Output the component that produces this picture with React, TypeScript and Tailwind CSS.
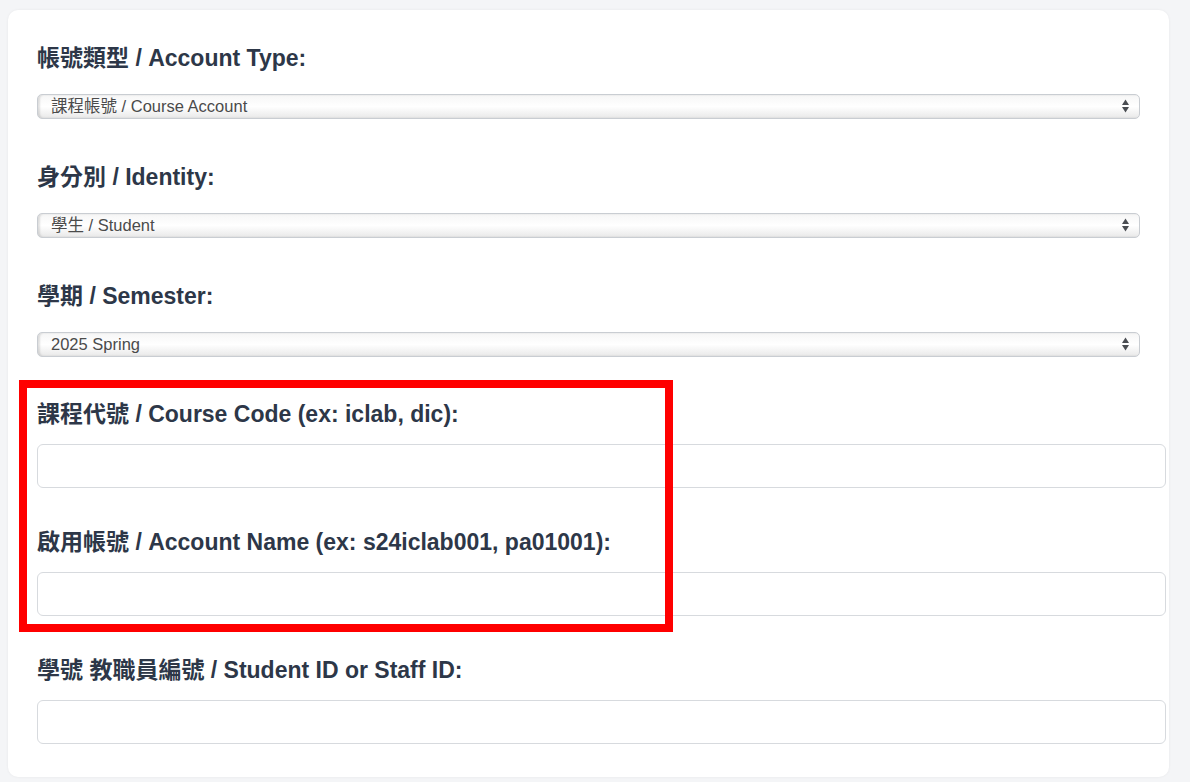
import { useState } from 'react';

const labelClass =
  "block text-[23px] font-bold leading-[28px] text-[#2d3748] [font-family:'Liberation_Sans','Noto_Sans_CJK_TC',sans-serif]";

const selectClass =
  "h-[25px] w-full appearance-none rounded-[5px] border border-[#c9cdd2] bg-linear-to-b from-[#f6f6f6] via-white to-[#e9e9e9] pl-[13px] pr-8 text-[16.5px] leading-[23px] text-[#4b4b4b] shadow-[inset_2px_0_2px_rgba(0,0,0,0.12)] outline-none [font-family:'Liberation_Sans','Noto_Sans_CJK_TC',sans-serif]";

const inputClass =
  "block h-[44px] w-full rounded-[6px] border border-[#d7dade] bg-white px-3 text-[16px] text-[#333] outline-none [font-family:'Liberation_Sans','Noto_Sans_CJK_TC',sans-serif]";

function Arrows() {
  return (
    <svg
      className="pointer-events-none absolute right-[10px] top-[5px]"
      width="9"
      height="14"
      viewBox="0 0 9 14"
      aria-hidden
    >
      <path d="M4.5 0.5 L8 6 L1 6 Z" fill="#4a4d52" />
      <path d="M4.5 13.5 L8 8 L1 8 Z" fill="#4a4d52" />
    </svg>
  );
}

function SelectField({
  label,
  value,
  options,
  onChange,
  last,
}: {
  label: string;
  value: string;
  options: string[];
  onChange: (v: string) => void;
  last?: boolean;
}) {
  return (
    <div className={last ? 'mb-[43px]' : 'mb-[44px]'}>
      <label className={labelClass}>{label}</label>
      <div className="relative mr-[26px] mt-[22px]">
        <select value={value} onChange={(e) => onChange(e.target.value)} className={selectClass}>
          {options.map((o) => (
            <option key={o} value={o}>
              {o}
            </option>
          ))}
        </select>
        <Arrows />
      </div>
    </div>
  );
}

function TextField({ label, last }: { label: string; last?: boolean }) {
  const [v, setV] = useState('');
  return (
    <div className={last ? '' : 'mb-[40px]'}>
      <label className={labelClass}>{label}</label>
      <input value={v} onChange={(e) => setV(e.target.value)} className={`${inputClass} mt-[16px]`} />
    </div>
  );
}

export default function App() {
  const [accountType, setAccountType] = useState('課程帳號 / Course Account');
  const [identity, setIdentity] = useState('學生 / Student');
  const [semester, setSemester] = useState('2025 Spring');

  return (
    <div className="relative min-h-screen bg-[#f4f5f7] pl-[8px] pr-[21px] pt-[10px]">
      <div className="rounded-[10px] bg-white pb-[33px] pl-[29px] pr-[3px] pt-[34px] shadow-[0_0_3px_rgba(0,0,0,0.06)]">
        <SelectField
          label="帳號類型 / Account Type:"
          value={accountType}
          options={['課程帳號 / Course Account', '個人帳號 / Personal Account']}
          onChange={setAccountType}
        />
        <SelectField
          label="身分別 / Identity:"
          value={identity}
          options={['學生 / Student', '教職員 / Staff']}
          onChange={setIdentity}
        />
        <SelectField
          label="學期 / Semester:"
          value={semester}
          options={['2025 Spring', '2024 Fall']}
          onChange={setSemester}
          last
        />
        <TextField label="課程代號 / Course Code (ex: iclab, dic):" />
        <TextField label="啟用帳號 / Account Name (ex: s24iclab001, pa01001):" />
        <TextField label="學號 教職員編號 / Student ID or Staff ID:" last />
      </div>

      {/* highlight annotation */}
      <div className="pointer-events-none absolute left-[19px] top-[380px] h-[252px] w-[654px] border-[8px] border-[#ff0000]" />
    </div>
  );
}
